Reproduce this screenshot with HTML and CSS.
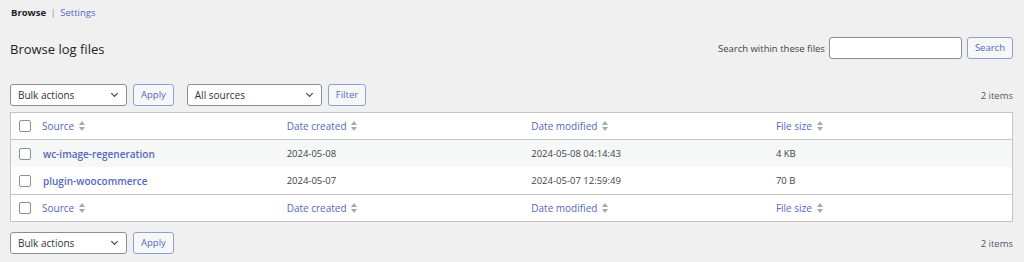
FILE: index.html
```html
<!DOCTYPE html>
<html lang="en">
<head>
    <meta charset="UTF-8">
    <title>Browse log files</title>
    <link rel="stylesheet" href="styles.css">
</head>
<body>
    <div class="subnav">
        <span class="current">Browse</span>
        <span class="sep">|</span>
        <a href="#">Settings</a>
    </div>

    <div class="page-head">
        <h1>Browse log files</h1>
        <form class="search-box">
            <label>Search within these files</label>
            <input type="text" class="search-input">
            <button type="button" class="btn">Search</button>
        </form>
    </div>

    <div class="tablenav">
        <div class="actions">
            <div class="select wide-1">Bulk actions</div>
            <button type="button" class="btn">Apply</button>
            <div class="select wide-2 spaced">All sources</div>
            <button type="button" class="btn">Filter</button>
        </div>
        <span class="count">2 items</span>
    </div>

    <table class="logs">
        <thead>
            <tr>
                <td class="check"><span class="box"></span></td>
                <th><a href="#">Source <span class="sort"></span></a></th>
                <th><a href="#">Date created <span class="sort"></span></a></th>
                <th><a href="#">Date modified <span class="sort"></span></a></th>
                <th><a href="#">File size <span class="sort"></span></a></th>
            </tr>
        </thead>
        <tbody>
            <tr class="alt">
                <td class="check"><span class="box"></span></td>
                <td><a href="#" class="name">wc-image-regeneration</a></td>
                <td>2024-05-08</td>
                <td>2024-05-08 04:14:43</td>
                <td>4 KB</td>
            </tr>
            <tr>
                <td class="check"><span class="box"></span></td>
                <td><a href="#" class="name">plugin-woocommerce</a></td>
                <td>2024-05-07</td>
                <td>2024-05-07 12:59:49</td>
                <td>70 B</td>
            </tr>
        </tbody>
        <tfoot>
            <tr>
                <td class="check"><span class="box"></span></td>
                <th><a href="#">Source <span class="sort"></span></a></th>
                <th><a href="#">Date created <span class="sort"></span></a></th>
                <th><a href="#">Date modified <span class="sort"></span></a></th>
                <th><a href="#">File size <span class="sort"></span></a></th>
            </tr>
        </tfoot>
    </table>

    <div class="tablenav bottom">
        <div class="actions">
            <div class="select wide-1">Bulk actions</div>
            <button type="button" class="btn">Apply</button>
        </div>
        <span class="count">2 items</span>
    </div>
</body>
</html>
```

FILE: styles.css
```css
body {
    margin: 0;
    padding: 0 11px 0 10px;
    background: #f0f0f1;
    font-family: "Open Sans", "Noto Sans", sans-serif;
    font-size: 10px;
    color: #3c434a;
}

a {
    color: #5567c0;
    text-decoration: none;
}

.subnav {
    height: 14px;
    padding: 6px 0 0 1px;
    font-size: 9.5px;
}

.subnav .current {
    font-weight: 700;
    color: #1d2327;
}

.subnav .sep {
    color: #8c8f94;
    margin: 0 2px;
}

.page-head {
    display: flex;
    justify-content: space-between;
    align-items: center;
    margin-top: 17px;
    height: 22px;
}

h1 {
    margin: 2px 0 0;
    font-size: 13px;
    font-weight: 400;
    color: #1d2327;
}

.search-box {
    display: flex;
    align-items: center;
    margin: 0;
}

.search-box label {
    font-size: 9.5px;
    margin-right: 4px;
}

.search-input {
    box-sizing: border-box;
    width: 133px;
    height: 22px;
    border: 1px solid #8c8f94;
    border-radius: 3px;
    background: #fff;
    margin: 0 5px 0 0;
}

.btn {
    box-sizing: border-box;
    height: 22px;
    padding: 0 7px;
    border: 1px solid #929dd6;
    border-radius: 3px;
    background: #f6f7f7;
    color: #5567c0;
    font-family: inherit;
    font-size: 9.5px;
    line-height: 20px;
}

.tablenav {
    display: flex;
    justify-content: space-between;
    align-items: center;
    margin-top: 25px;
    height: 22px;
}

.tablenav.bottom {
    margin-top: 10px;
}

.actions {
    display: flex;
    align-items: center;
    gap: 6px;
}

.select {
    box-sizing: border-box;
    height: 22px;
    padding: 0 20px 0 7px;
    border: 1px solid #8c8f94;
    border-radius: 3px;
    background: #fff;
    color: #2c3338;
    font-size: 10px;
    line-height: 20px;
    position: relative;
}

.select::after {
    content: "";
    position: absolute;
    right: 9px;
    top: 6px;
    width: 4px;
    height: 4px;
    border-right: 1.3px solid #2c3338;
    border-bottom: 1.3px solid #2c3338;
    transform: rotate(45deg);
}

.wide-1 {
    width: 117px;
}

.wide-2 {
    width: 135px;
}

.spaced {
    margin-left: 7px;
}

.count {
    font-size: 9.5px;
    color: #50575e;
}

.logs {
    width: 100%;
    margin-top: 6px;
    border-collapse: collapse;
    border: 1px solid #c3c4c7;
    background: #fff;
    table-layout: fixed;
}

.logs td,
.logs th {
    height: 27px;
    padding: 0 0 0 8px;
    text-align: left;
    font-weight: 400;
    font-size: 9.5px;
    vertical-align: middle;
}

.logs thead td,
.logs thead th,
.logs tfoot td,
.logs tfoot th {
    height: 26px;
}

.logs thead tr {
    border-bottom: 1px solid #c3c4c7;
}

.logs tfoot tr {
    border-top: 1px solid #c3c4c7;
}

.logs th a {
    font-size: 10px;
}

.logs td.check {
    width: 15px;
    padding-left: 8px;
}

.logs tr.alt {
    background: #f6f7f7;
}

.box {
    display: block;
    box-sizing: border-box;
    width: 12px;
    height: 12px;
    border: 1px solid #8c8f94;
    border-radius: 2px;
    background: #fff;
}

.name {
    font-weight: 600;
    font-size: 10px;
    margin-left: 1px;
}

.sort {
    display: inline-block;
    position: relative;
    width: 7px;
    height: 10px;
    margin-left: 2px;
    vertical-align: -1px;
}

.sort::before,
.sort::after {
    content: "";
    position: absolute;
    left: 0;
    border-left: 3.5px solid transparent;
    border-right: 3.5px solid transparent;
}

.sort::before {
    top: 0;
    border-bottom: 4px solid #a7aaad;
}

.sort::after {
    bottom: 0;
    border-top: 4px solid #a7aaad;
}
```
